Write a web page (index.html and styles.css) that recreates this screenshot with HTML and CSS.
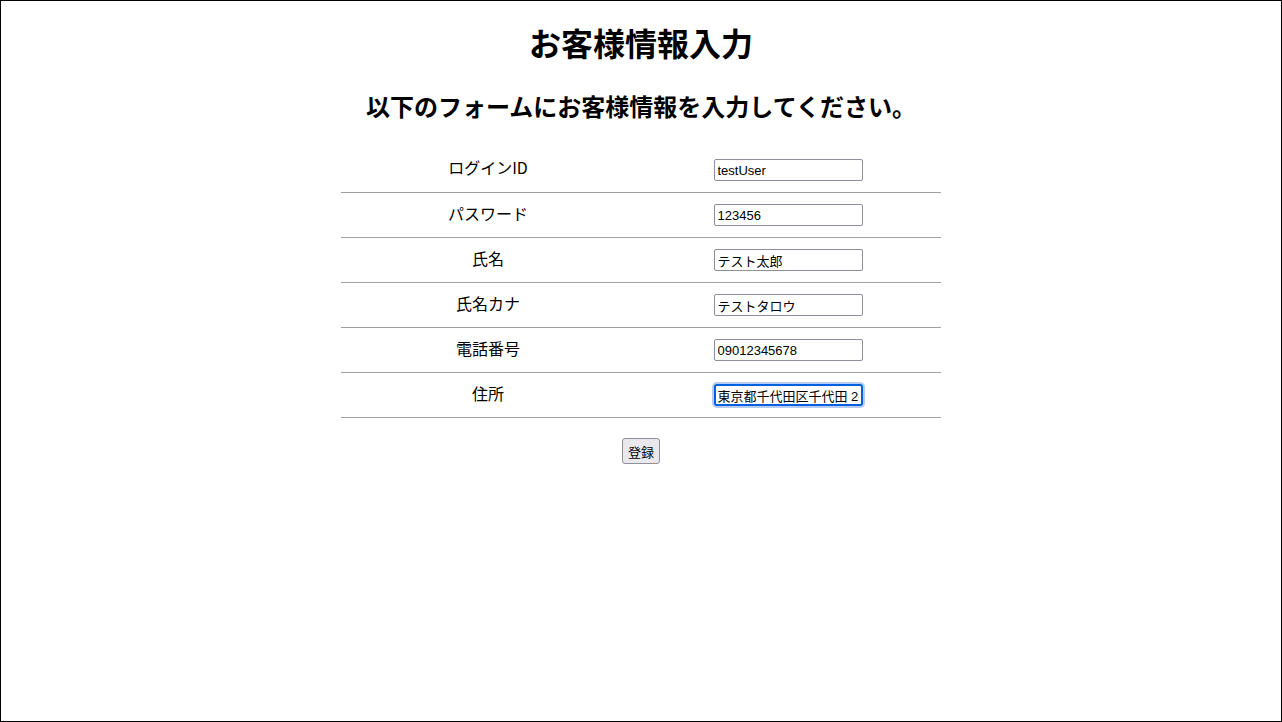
FILE: index.html
```html
<!DOCTYPE html>
<html lang="ja">
<head>
<meta charset="utf-8">
<title>お客様情報入力</title>
<link rel="stylesheet" href="styles.css">
</head>
<body>
<div class="frame">
  <h1 class="title">お客様情報入力</h1>
  <h2 class="subtitle">以下のフォームにお客様情報を入力してください。</h2>
  <form class="form">
    <table class="form-table">
      <tr><td class="label">ログインID</td><td class="field"><input class="input" type="text" value="testUser"></td></tr>
      <tr><td class="label">パスワード</td><td class="field"><input class="input" type="text" value="123456"></td></tr>
      <tr><td class="label">氏名</td><td class="field"><input class="input" type="text" value="テスト太郎"></td></tr>
      <tr><td class="label">氏名カナ</td><td class="field"><input class="input" type="text" value="テストタロウ"></td></tr>
      <tr><td class="label">電話番号</td><td class="field"><input class="input" type="text" value="09012345678"></td></tr>
      <tr><td class="label">住所</td><td class="field"><input class="input input-focused" type="text" value="東京都千代田区千代田 2-1"></td></tr>
    </table>
    <div class="actions"><button class="btn" type="button">登録</button></div>
  </form>
</div>
</body>
</html>
```

FILE: styles.css
```css
html, body {
  margin: 0;
  padding: 0;
  background: #fff;
}
body {
  font-family: "Noto Sans CJK JP", "Noto Sans", sans-serif;
  color: #000;
}
.frame {
  box-sizing: border-box;
  width: 1282px;
  height: 722px;
  border: 1px solid #000;
  display: flex;
  flex-direction: column;
  align-items: center;
}
.title {
  margin: 18px 0 0;
  font-size: 32px;
  line-height: 46px;
  font-weight: bold;
}
.subtitle {
  margin: 24px 0 0;
  font-size: 24px;
  line-height: 34px;
  font-weight: bold;
}
.form {
  margin-top: 24px;
  display: flex;
  flex-direction: column;
  align-items: center;
}
.form-table {
  width: 600px;
  border-collapse: collapse;
  border-spacing: 0;
}
.form-table tr {
  height: 45px;
}
.form-table td {
  padding: 0 0 2px;
  text-align: center;
  vertical-align: middle;
  border-bottom: 1px solid #a0a0a0;
}
.label {
  width: 294px;
  font-size: 16px;
  line-height: 20px;
  padding-bottom: 4px !important;
}
.input {
  box-sizing: border-box;
  width: 149px;
  height: 22px;
  padding: 1px 3px;
  border: 1px solid #8f8f9d;
  border-radius: 2px;
  font-family: "Liberation Sans", "Noto Sans CJK JP", sans-serif;
  font-size: 13px;
  color: #000;
  background: #fff;
  vertical-align: middle;
}
.input-focused {
  border: 2px solid #0060df;
  border-radius: 3px;
  padding: 0 2px;
  box-shadow: 0 0 0 2px #b6cdf0;
}
.actions {
  margin-top: 20px;
}
.btn {
  box-sizing: border-box;
  height: 26px;
  padding: 0 5px;
  border: 1px solid #8f8f9d;
  border-radius: 3px;
  background: #e9e9ed;
  font-family: "Noto Sans CJK JP", sans-serif;
  font-size: 13px;
  color: #000;
}
```
